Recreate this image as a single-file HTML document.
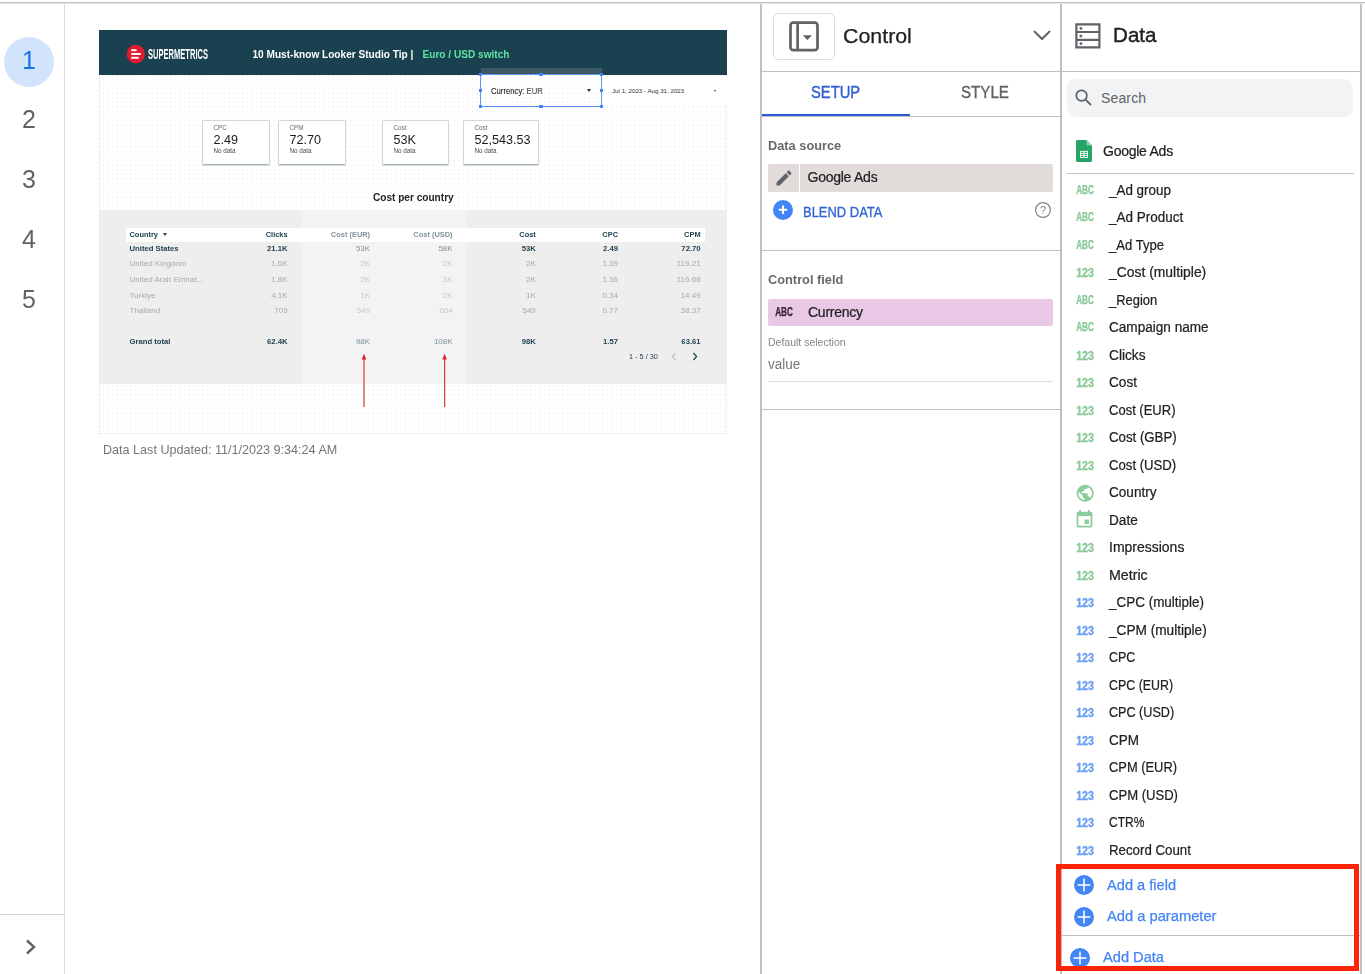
<!DOCTYPE html>
<html lang="en">
<head>
<meta charset="utf-8">
<title>Looker Studio – Control / Data</title>
<style>
html,body{margin:0;padding:0;}
body{width:1365px;height:974px;position:relative;overflow:hidden;background:#fff;
  font-family:"Liberation Sans",sans-serif;color:#202124;}
.abs{position:absolute;}
.t{position:absolute;white-space:nowrap;line-height:1;transform-origin:0 50%;}
.ln{position:absolute;background:#bdc1c6;}
/* left nav */
.pg{position:absolute;left:0;width:58px;text-align:center;font-size:25px;line-height:1;color:#5f6368;}
/* canvas */
#cv{position:absolute;left:99px;top:30px;width:628px;height:403.5px;
  background-color:#fff;
  background-image:radial-gradient(circle,#e0e2e3 0.4px,transparent 0.8px);
  background-size:4.5px 4.5px;background-position:-2.25px -2px;}
.lato{font-family:"Liberation Sans",sans-serif;}
.card{position:absolute;top:89.6px;height:45.6px;background:#fff;border:1px solid #ccd8db;border-bottom-color:#a3b3b9;border-radius:2px;box-sizing:border-box;box-shadow:0 1px 1px rgba(60,80,90,0.22);}
.card .l{position:absolute;left:10.5px;top:4.2px;font-size:6.3px;line-height:1;color:#6a6a6a;white-space:nowrap;}
.card .v{position:absolute;left:10.5px;top:13.2px;font-size:12.6px;line-height:1;color:#1b1b1b;white-space:nowrap;}
.card .n{position:absolute;left:10.5px;top:27.7px;font-size:6.3px;line-height:1;color:#4a4a4a;white-space:nowrap;}
.row{position:absolute;left:0;width:629px;height:10px;font-size:8px;line-height:10px;color:#1f4250;}
.row.b{font-size:7.7px;}
.row.h{font-size:7.45px;}
.row span{position:absolute;top:0;white-space:nowrap;}
.row .c0{left:30.5px;}
.row .c1{right:440.4px;}
.row .c2{right:357.9px;}
.row .c3{right:275.4px;}
.row .c4{right:192.2px;}
.row .c5{right:110px;}
.row .c6{right:27.4px;}
.b{font-weight:bold;}
.fd{color:#a0acb1;}
.fd2{color:#c2cacd;}
.md{color:#7d939b;}
/* panels */
.fi{position:absolute;left:1076px;width:19px;height:11px;}
.fn{position:absolute;left:1109px;font-size:14px;line-height:16px;white-space:nowrap;color:#202124;transform-origin:0 50%;-webkit-text-stroke:0.22px #202124;}
</style>
</head>
<body>
<div id="wrap" style="position:absolute;left:0;top:0;width:1365px;height:974px;overflow:hidden;opacity:0.999">

<!-- top border -->
<div class="ln" style="left:0;top:2px;width:1365px;height:2px;background:linear-gradient(#bcc0c7 0,#bcc0c7 50%,#e2e4e8 50%,#e2e4e8 100%)"></div>

<!-- LEFT NAV -->
<div class="ln" style="left:64px;top:4px;width:1px;height:970px;background:#d8dadd"></div>
<div class="abs" style="left:4px;top:37px;width:50px;height:50px;border-radius:50%;background:#d2e3fc"></div>
<div class="pg" style="top:48px;color:#1a73e8">1</div>
<div class="pg" style="top:107px">2</div>
<div class="pg" style="top:167px">3</div>
<div class="pg" style="top:227px">4</div>
<div class="pg" style="top:287px">5</div>
<div class="ln" style="left:0;top:914px;width:64px;height:1px;background:#d4d6da"></div>
<svg class="abs" style="left:20px;top:934px" width="20" height="26" viewBox="0 0 20 26"><path d="M7 6.5 L14 13 L7 19.5" fill="none" stroke="#5f6368" stroke-width="2.4"/></svg>

<!-- CANVAS -->
<div id="cv" class="lato">
  <div class="abs" style="left:0;top:44px;width:628px;height:359.5px;box-sizing:border-box;border:1px dotted #dddfdf;border-top:none"></div>
  <div class="abs" style="left:0;top:0;width:628px;height:44.5px;background:#19414f"></div>
  <!-- logo -->
  <svg class="abs" style="left:27px;top:14px" width="20" height="20" viewBox="0 0 20 20">
    <circle cx="9.8" cy="10" r="9.2" fill="#e01b2f"/>
    <rect x="5.2" y="5.2" width="5.4" height="2" fill="#fff"/>
    <rect x="5.2" y="9" width="9.6" height="2" fill="#fff"/>
    <rect x="5.2" y="12.8" width="7.4" height="2" fill="#fff"/>
  </svg>
  <svg class="abs" style="left:48px;top:16px" width="64" height="16" viewBox="0 0 64 16">
    <text x="1" y="13.2" font-family="Liberation Sans, sans-serif" font-weight="bold" font-size="14.2" fill="#fff" textLength="60" lengthAdjust="spacingAndGlyphs">SUPERMETRICS</text>
  </svg>
  <div class="t b" style="left:153.5px;top:19.8px;font-size:10.1px;color:#fff">10 Must-know Looker Studio Tip |</div>
  <div class="t b" style="left:323.5px;top:19.8px;font-size:10.1px;color:#5fe3a1">Euro / USD switch</div>

  <!-- selected control -->
  <div class="abs" style="left:381.5px;top:38px;width:121px;height:6.5px;background:#3b5964"></div>
  <div class="abs" style="left:381px;top:44px;width:122px;height:33px;border:1px solid #5e97f6;box-sizing:border-box"></div>
  <div class="t" style="left:392.3px;top:56.9px;font-size:8.3px;color:#222;transform:scaleX(0.93);-webkit-text-stroke:0.12px #333">Currency<span style="color:#555">: EUR</span></div>
  <div class="abs" style="left:487.5px;top:59px;width:0;height:0;border-left:2.4px solid transparent;border-right:2.4px solid transparent;border-top:3px solid #333"></div>
  <!-- handles -->
  <div class="abs" style="left:379.9px;top:42.9px;width:3.2px;height:3.2px;background:#4285f4"></div>
  <div class="abs" style="left:440.4px;top:42.9px;width:3.2px;height:3.2px;background:#4285f4"></div>
  <div class="abs" style="left:500.9px;top:42.9px;width:3.2px;height:3.2px;background:#4285f4"></div>
  <div class="abs" style="left:379.9px;top:58.9px;width:3.2px;height:3.2px;background:#4285f4"></div>
  <div class="abs" style="left:500.9px;top:58.9px;width:3.2px;height:3.2px;background:#4285f4"></div>
  <div class="abs" style="left:379.9px;top:74.9px;width:3.2px;height:3.2px;background:#4285f4"></div>
  <div class="abs" style="left:440.4px;top:74.9px;width:3.2px;height:3.2px;background:#4285f4"></div>
  <div class="abs" style="left:500.9px;top:74.9px;width:3.2px;height:3.2px;background:#4285f4"></div>
  <!-- date range -->
  <div class="abs" style="left:504px;top:47px;width:124px;height:28px;background:#fff"></div>
  <div class="t" style="left:513px;top:57.5px;font-size:6.2px;color:#333">Jul 1, 2023 - Aug 31, 2023</div>
  <div class="abs" style="left:614.5px;top:60px;width:0;height:0;border-left:1.8px solid transparent;border-right:1.8px solid transparent;border-top:2.4px solid #333"></div>

  <!-- KPI cards -->
  <div class="card" style="left:103px;width:68px"><div class="l">CPC</div><div class="v">2.49</div><div class="n">No data</div></div>
  <div class="card" style="left:179px;width:68px"><div class="l">CPM</div><div class="v">72.70</div><div class="n">No data</div></div>
  <div class="card" style="left:283px;width:67px"><div class="l">Cost</div><div class="v">53K</div><div class="n">No data</div></div>
  <div class="card" style="left:364px;width:76px"><div class="l">Cost</div><div class="v">52,543.53</div><div class="n">No data</div></div>

  <div class="t b" style="left:273.5px;top:161.8px;font-size:11.4px;color:#222;transform:scaleX(0.885)">Cost per country</div>

  <!-- table -->
  <div class="abs" style="left:0;top:180px;width:628px;height:174px;background:#eeeeee"></div>
  <div class="abs" style="left:202px;top:180px;width:165.5px;height:174px;background:#f3f3f3"></div>
  <div class="abs" style="left:27px;top:197.5px;width:579px;height:14px;background:#fff"></div>
  <div class="abs" style="left:202px;top:197.5px;width:165.5px;height:14px;background:rgba(255,255,255,0.6)"></div>

  <div class="row b h" style="top:199.9px"><span class="c0">Country <i style="display:inline-block;width:0;height:0;border-left:2.1px solid transparent;border-right:2.1px solid transparent;border-top:3px solid #1f4250;vertical-align:0.5px;margin-left:2.5px"></i></span><span class="c1">Clicks</span><span class="c2 md">Cost (EUR)</span><span class="c3 md">Cost (USD)</span><span class="c4">Cost</span><span class="c5">CPC</span><span class="c6">CPM</span></div>
  <div class="row b" style="top:213.9px"><span class="c0">United States</span><span class="c1">21.1K</span><span class="c2 md" style="font-weight:normal;font-size:8px">53K</span><span class="c3 md" style="font-weight:normal;font-size:8px">58K</span><span class="c4">53K</span><span class="c5">2.49</span><span class="c6">72.70</span></div>
  <div class="row fd" style="top:228.9px"><span class="c0">United Kingdom</span><span class="c1">1.6K</span><span class="c2 fd2">2K</span><span class="c3 fd2">2K</span><span class="c4">2K</span><span class="c5">1.39</span><span class="c6">119.21</span></div>
  <div class="row fd" style="top:244.9px"><span class="c0">United Arab Emirat...</span><span class="c1">1.8K</span><span class="c2 fd2">2K</span><span class="c3 fd2">3K</span><span class="c4">2K</span><span class="c5">1.36</span><span class="c6">116.68</span></div>
  <div class="row fd" style="top:260.9px"><span class="c0">Turkiye</span><span class="c1">4.1K</span><span class="c2 fd2">1K</span><span class="c3 fd2">2K</span><span class="c4">1K</span><span class="c5">0.34</span><span class="c6">14.49</span></div>
  <div class="row fd" style="top:275.9px"><span class="c0">Thailand</span><span class="c1">709</span><span class="c2 fd2">549</span><span class="c3 fd2">604</span><span class="c4">549</span><span class="c5">0.77</span><span class="c6">38.37</span></div>
  <div class="row b" style="top:306.9px"><span class="c0">Grand total</span><span class="c1">62.4K</span><span class="c2 md" style="font-weight:normal;font-size:8px">98K</span><span class="c3 md" style="font-weight:normal;font-size:8px">108K</span><span class="c4">98K</span><span class="c5">1.57</span><span class="c6">63.61</span></div>

  <div class="t" style="left:530px;top:322.5px;font-size:7.3px;color:#1f4250">1 - 5 / 30</div>
  <svg class="abs" style="left:568px;top:320px" width="36" height="13" viewBox="0 0 36 13">
    <path d="M8.6 3 L5.4 6.5 L8.6 10" fill="none" stroke="#b0b8bb" stroke-width="1.1"/>
    <path d="M26.4 3 L29.6 6.5 L26.4 10" fill="none" stroke="#1f4250" stroke-width="1.2"/>
  </svg>
  <!-- red arrows -->
  <svg class="abs" style="left:260px;top:322px" width="92" height="56" viewBox="0 0 92 56">
    <path d="M5 55 V6" stroke="#dc3a44" stroke-width="1.250" fill="none"/>
    <path d="M5 1.700 L7.300 7.600 H2.700 Z" fill="#d6222e"/>
    <path d="M85.600 55 V6" stroke="#dc3a44" stroke-width="1.250" fill="none"/>
    <path d="M85.600 1.700 L87.900 7.600 H83.300 Z" fill="#d6222e"/>
  </svg>
</div>
<div class="t" style="left:103px;top:443.5px;font-size:12.6px;color:#72777b">Data Last Updated: 11/1/2023 9:34:24 AM</div>

<!-- CONTROL PANEL -->
<div class="ln" style="left:760px;top:4px;width:2px;height:970px"></div>
<div class="abs" style="left:773px;top:13px;width:62px;height:47px;box-sizing:border-box;border:1px solid #dadce0;border-radius:5px;background:#fff"></div>
<svg class="abs" style="left:788px;top:20px" width="32" height="33" viewBox="0 0 32 33">
  <rect x="2.500" y="2.600" width="27" height="27.600" rx="2.800" fill="none" stroke="#5f6368" stroke-width="2.700"/>
  <path d="M9.600 2.600 V30.200" stroke="#5f6368" stroke-width="2.700"/>
  <path d="M14.800 15.300 H24 L19.400 20 Z" fill="#5f6368"/>
</svg>
<div class="t" style="left:842.5px;top:26.5px;font-size:19.8px;color:#202124;transform:scaleX(1.08);-webkit-text-stroke:0.25px #202124">Control</div>
<svg class="abs" style="left:1030px;top:26px" width="24" height="20" viewBox="0 0 24 20"><path d="M4.600 5.600 L12 13 L19.400 5.600" fill="none" stroke="#5a5e63" stroke-width="2" stroke-linecap="round" stroke-linejoin="round"/></svg>
<div class="ln" style="left:762px;top:71px;width:298px;height:1px"></div>
<div class="t" style="left:810.5px;top:84.5px;font-size:16px;color:#2d5fd0;transform:scaleX(0.922);-webkit-text-stroke:0.35px #2d5fd0">SETUP</div>
<div class="t" style="left:961px;top:84.5px;font-size:16px;color:#5f6368;transform:scaleX(0.945);-webkit-text-stroke:0.35px #5f6368">STYLE</div>
<div class="ln" style="left:762px;top:116px;width:298px;height:1px"></div>
<div class="abs" style="left:762px;top:114px;width:148px;height:2px;background:#2a5bd7"></div>

<div class="t b" style="left:768px;top:138.5px;font-size:13px;color:#66696d;transform:scaleX(0.984)">Data source</div>
<div class="abs" style="left:768px;top:164px;width:285px;height:28px;border-radius:2px;background:#e1dbd9"></div>
<div class="abs" style="left:798.5px;top:164px;width:1px;height:28px;background:#fff"></div>
<svg class="abs" style="left:774px;top:168px" width="20" height="20" viewBox="0 0 24 24"><path fill="#5f6368" d="M3 17.25V21h3.75L17.81 9.94l-3.75-3.75L3 17.25zM20.71 7.04a1 1 0 0 0 0-1.41l-2.34-2.34a1 1 0 0 0-1.41 0l-1.83 1.83 3.75 3.75 1.83-1.83z"/></svg>
<div class="t" style="left:807.5px;top:170px;font-size:14px;letter-spacing:-0.25px;color:#202124;-webkit-text-stroke:0.22px #202124">Google Ads</div>
<div class="abs" style="left:773px;top:199.5px;width:20px;height:20px;border-radius:50%;background:#4285f4"></div>
<svg class="abs" style="left:773px;top:199.5px" width="20" height="20" viewBox="0 0 20 20"><path d="M10 5.600 V14 M5.800 9.800 H14.200" stroke="#fff" stroke-width="2" fill="none"/></svg>
<div class="t" style="left:803px;top:205px;font-size:14px;color:#2f62d4;transform:scaleX(0.925);-webkit-text-stroke:0.3px #2f62d4">BLEND DATA</div>
<svg class="abs" style="left:1034px;top:201px" width="18" height="18" viewBox="0 0 18 18"><circle cx="9" cy="9" r="7.4" fill="none" stroke="#80868b" stroke-width="1.2"/><text x="9" y="13" text-anchor="middle" font-family="Liberation Sans, sans-serif" font-size="11" fill="#80868b">?</text></svg>
<div class="ln" style="left:762px;top:250px;width:298px;height:1px"></div>

<div class="t b" style="left:768px;top:272.5px;font-size:13px;color:#66696d;transform:scaleX(0.984)">Control field</div>
<div class="abs" style="left:768px;top:299px;width:285px;height:27px;border-radius:2px;background:#e8c8e4"></div>
<svg class="abs" style="left:775px;top:307px" width="19" height="11" viewBox="0 0 19 11"><text x="0.2" y="9.1" font-family="Liberation Sans, sans-serif" font-weight="bold" font-size="12" fill="#3c2a3a" stroke="#3c2a3a" stroke-width="0.35" textLength="17.8" lengthAdjust="spacingAndGlyphs">ABC</text></svg>
<div class="t" style="left:808px;top:305px;font-size:14px;letter-spacing:-0.25px;color:#202124;-webkit-text-stroke:0.22px #202124">Currency</div>
<div class="t" style="left:768px;top:337px;font-size:10.5px;color:#80868b">Default selection</div>
<div class="t" style="left:768px;top:357px;font-size:14px;color:#757575;transform:scaleX(0.96)">value</div>
<div class="ln" style="left:768px;top:381px;width:285px;height:1px;background:#dcdee1"></div>
<div class="ln" style="left:762px;top:409px;width:298px;height:1px"></div>

<!-- DATA PANEL -->
<div class="ln" style="left:1060px;top:4px;width:2px;height:970px"></div>
<div class="ln" style="left:1360px;top:4px;width:2px;height:970px"></div>
<svg class="abs" style="left:1075px;top:23px" width="26" height="26" viewBox="0 0 26 26">
  <path d="M1.4 1.4 H24.4 V24.4 H1.4 Z M1.4 9 H24.4 M1.4 16.8 H24.4" fill="none" stroke="#5f6368" stroke-width="2.2"/>
  <rect x="4.6" y="4.2" width="2.6" height="2.4" fill="#5f6368"/><rect x="4.6" y="11.8" width="2.6" height="2.4" fill="#5f6368"/><rect x="4.6" y="19.4" width="2.6" height="2.4" fill="#5f6368"/>
</svg>
<div class="t" style="left:1113px;top:25px;font-size:20px;color:#202124;-webkit-text-stroke:0.4px #202124;transform:scaleX(1.03)">Data</div>
<div class="ln" style="left:1062px;top:71px;width:298px;height:1px"></div>
<div class="abs" style="left:1067px;top:79px;width:286px;height:38px;border-radius:9px;background:#f1f3f4"></div>
<svg class="abs" style="left:1074px;top:88px" width="20" height="20" viewBox="0 0 20 20"><circle cx="7.6" cy="7.6" r="5.3" fill="none" stroke="#5f6368" stroke-width="1.7"/><path d="M11.6 11.6 L17 17" stroke="#5f6368" stroke-width="1.8"/></svg>
<div class="t" style="left:1101px;top:91px;font-size:14px;letter-spacing:0.15px;color:#5f6368">Search</div>

<svg class="abs" style="left:1076px;top:140px" width="16" height="22" viewBox="0 0 16 22">
  <path d="M1.5 0 H10.5 L16 5.5 V20.5 A1.5 1.5 0 0 1 14.5 22 H1.5 A1.5 1.5 0 0 1 0 20.500 V1.5 A1.5 1.5 0 0 1 1.5 0 Z" fill="#23a566"/>
  <path d="M10.500 0 L16 5.500 H11.500 A1 1 0 0 1 10.500 4.500 Z" fill="#8ed1b1"/>
  <rect x="4" y="10.900" width="8" height="7" fill="#fff"/><g fill="#23a566"><rect x="4.900" y="11.800" width="2.650" height="1.150"/><rect x="8.450" y="11.800" width="2.650" height="1.150"/><rect x="4.900" y="13.850" width="2.650" height="1.150"/><rect x="8.450" y="13.850" width="2.650" height="1.150"/><rect x="4.900" y="15.900" width="2.650" height="1.150"/><rect x="8.450" y="15.900" width="2.650" height="1.150"/></g>
</svg>
<div class="t" style="left:1103px;top:144px;font-size:14px;letter-spacing:-0.25px;color:#202124;-webkit-text-stroke:0.22px #202124">Google Ads</div>
<div class="ln" style="left:1067px;top:173px;width:287px;height:1px"></div>

<!--FIELDS-->
<svg class="fi" style="top:184.5px" width="19" height="11" viewBox="0 0 19 11"><text x="0.2" y="9.1" font-family="Liberation Sans, sans-serif" font-weight="bold" font-size="12" fill="#8ccb9a" stroke="#8ccb9a" stroke-width="0.35" textLength="17.8" lengthAdjust="spacingAndGlyphs">ABC</text></svg>
<div class="fn" style="top:182px;transform:scaleX(0.957)">_Ad group</div>
<svg class="fi" style="top:212px" width="19" height="11" viewBox="0 0 19 11"><text x="0.2" y="9.1" font-family="Liberation Sans, sans-serif" font-weight="bold" font-size="12" fill="#8ccb9a" stroke="#8ccb9a" stroke-width="0.35" textLength="17.8" lengthAdjust="spacingAndGlyphs">ABC</text></svg>
<div class="fn" style="top:209px;transform:scaleX(0.964)">_Ad Product</div>
<svg class="fi" style="top:239.5px" width="19" height="11" viewBox="0 0 19 11"><text x="0.2" y="9.1" font-family="Liberation Sans, sans-serif" font-weight="bold" font-size="12" fill="#8ccb9a" stroke="#8ccb9a" stroke-width="0.35" textLength="17.8" lengthAdjust="spacingAndGlyphs">ABC</text></svg>
<div class="fn" style="top:237px;transform:scaleX(0.934)">_Ad Type</div>
<svg class="fi" style="top:267px" width="19" height="11" viewBox="0 0 19 11"><text x="0.2" y="9.7" font-family="Liberation Sans, sans-serif" font-weight="bold" font-size="12" fill="#8ccb9a" stroke="#8ccb9a" stroke-width="0.35" textLength="17.8" lengthAdjust="spacingAndGlyphs">123</text></svg>
<div class="fn" style="top:264px;transform:scaleX(0.992)">_Cost (multiple)</div>
<svg class="fi" style="top:294.5px" width="19" height="11" viewBox="0 0 19 11"><text x="0.2" y="9.1" font-family="Liberation Sans, sans-serif" font-weight="bold" font-size="12" fill="#8ccb9a" stroke="#8ccb9a" stroke-width="0.35" textLength="17.8" lengthAdjust="spacingAndGlyphs">ABC</text></svg>
<div class="fn" style="top:292px;transform:scaleX(0.923)">_Region</div>
<svg class="fi" style="top:322px" width="19" height="11" viewBox="0 0 19 11"><text x="0.2" y="9.1" font-family="Liberation Sans, sans-serif" font-weight="bold" font-size="12" fill="#8ccb9a" stroke="#8ccb9a" stroke-width="0.35" textLength="17.8" lengthAdjust="spacingAndGlyphs">ABC</text></svg>
<div class="fn" style="top:319px;transform:scaleX(0.970)">Campaign name</div>
<svg class="fi" style="top:349.5px" width="19" height="11" viewBox="0 0 19 11"><text x="0.2" y="9.7" font-family="Liberation Sans, sans-serif" font-weight="bold" font-size="12" fill="#8ccb9a" stroke="#8ccb9a" stroke-width="0.35" textLength="17.8" lengthAdjust="spacingAndGlyphs">123</text></svg>
<div class="fn" style="top:347px;transform:scaleX(0.978)">Clicks</div>
<svg class="fi" style="top:377px" width="19" height="11" viewBox="0 0 19 11"><text x="0.2" y="9.7" font-family="Liberation Sans, sans-serif" font-weight="bold" font-size="12" fill="#8ccb9a" stroke="#8ccb9a" stroke-width="0.35" textLength="17.8" lengthAdjust="spacingAndGlyphs">123</text></svg>
<div class="fn" style="top:374px;transform:scaleX(0.971)">Cost</div>
<svg class="fi" style="top:404.5px" width="19" height="11" viewBox="0 0 19 11"><text x="0.2" y="9.7" font-family="Liberation Sans, sans-serif" font-weight="bold" font-size="12" fill="#8ccb9a" stroke="#8ccb9a" stroke-width="0.35" textLength="17.8" lengthAdjust="spacingAndGlyphs">123</text></svg>
<div class="fn" style="top:402px;transform:scaleX(0.929)">Cost (EUR)</div>
<svg class="fi" style="top:432px" width="19" height="11" viewBox="0 0 19 11"><text x="0.2" y="9.7" font-family="Liberation Sans, sans-serif" font-weight="bold" font-size="12" fill="#8ccb9a" stroke="#8ccb9a" stroke-width="0.35" textLength="17.8" lengthAdjust="spacingAndGlyphs">123</text></svg>
<div class="fn" style="top:429px;transform:scaleX(0.946)">Cost (GBP)</div>
<svg class="fi" style="top:459.5px" width="19" height="11" viewBox="0 0 19 11"><text x="0.2" y="9.7" font-family="Liberation Sans, sans-serif" font-weight="bold" font-size="12" fill="#8ccb9a" stroke="#8ccb9a" stroke-width="0.35" textLength="17.8" lengthAdjust="spacingAndGlyphs">123</text></svg>
<div class="fn" style="top:457px;transform:scaleX(0.939)">Cost (USD)</div>
<svg class="abs" style="left:1074.5px;top:482.8px" width="20.4" height="20.4" viewBox="0 0 24 24"><path fill="#8ccb9a" d="M12 2C6.48 2 2 6.48 2 12s4.480 10 10 10 10-4.480 10-10S17.520 2 12 2zm-1 17.930c-3.950-.490-7-3.850-7-7.930 0-.620.080-1.210.210-1.790L9 15v1c0 1.100.900 2 2 2v1.930zm6.900-2.540c-.260-.810-1-1.390-1.900-1.390h-1v-3c0-.550-.450-1-1-1H8v-2h2c.550 0 1-.450 1-1V7h2c1.100 0 2-.900 2-2v-.410c2.930 1.190 5 4.060 5 7.410 0 2.080-.800 3.970-2.100 5.390z"/></svg>
<div class="fn" style="top:484px;transform:scaleX(0.970)">Country</div>
<svg class="abs" style="left:1074.3px;top:509.3px" width="21" height="21" viewBox="0 0 24 24"><path fill="#8ccb9a" d="M17 12h-5v5h5v-5zM16 1v2H8V1H6v2H5c-1.110 0-1.990.900-1.990 2L3 19c0 1.100.890 2 2 2h14c1.100 0 2-.900 2-2V5c0-1.100-.900-2-2-2h-1V1h-2zm3 18H5V8h14v11z"/></svg>
<div class="fn" style="top:512px;transform:scaleX(0.971)">Date</div>
<svg class="fi" style="top:542px" width="19" height="11" viewBox="0 0 19 11"><text x="0.2" y="9.7" font-family="Liberation Sans, sans-serif" font-weight="bold" font-size="12" fill="#8ccb9a" stroke="#8ccb9a" stroke-width="0.35" textLength="17.8" lengthAdjust="spacingAndGlyphs">123</text></svg>
<div class="fn" style="top:539px;transform:scaleX(0.999)">Impressions</div>
<svg class="fi" style="top:569.5px" width="19" height="11" viewBox="0 0 19 11"><text x="0.2" y="9.7" font-family="Liberation Sans, sans-serif" font-weight="bold" font-size="12" fill="#8ccb9a" stroke="#8ccb9a" stroke-width="0.35" textLength="17.8" lengthAdjust="spacingAndGlyphs">123</text></svg>
<div class="fn" style="top:567px;transform:scaleX(1.015)">Metric</div>
<svg class="fi" style="top:597px" width="19" height="11" viewBox="0 0 19 11"><text x="0.2" y="9.7" font-family="Liberation Sans, sans-serif" font-weight="bold" font-size="12" fill="#6a9ff5" stroke="#6a9ff5" stroke-width="0.35" textLength="17.8" lengthAdjust="spacingAndGlyphs">123</text></svg>
<div class="fn" style="top:594px;transform:scaleX(0.962)">_CPC (multiple)</div>
<svg class="fi" style="top:624.5px" width="19" height="11" viewBox="0 0 19 11"><text x="0.2" y="9.7" font-family="Liberation Sans, sans-serif" font-weight="bold" font-size="12" fill="#6a9ff5" stroke="#6a9ff5" stroke-width="0.35" textLength="17.8" lengthAdjust="spacingAndGlyphs">123</text></svg>
<div class="fn" style="top:622px;transform:scaleX(0.974)">_CPM (multiple)</div>
<svg class="fi" style="top:652px" width="19" height="11" viewBox="0 0 19 11"><text x="0.2" y="9.7" font-family="Liberation Sans, sans-serif" font-weight="bold" font-size="12" fill="#6a9ff5" stroke="#6a9ff5" stroke-width="0.35" textLength="17.8" lengthAdjust="spacingAndGlyphs">123</text></svg>
<div class="fn" style="top:649px;transform:scaleX(0.890)">CPC</div>
<svg class="fi" style="top:679.5px" width="19" height="11" viewBox="0 0 19 11"><text x="0.2" y="9.7" font-family="Liberation Sans, sans-serif" font-weight="bold" font-size="12" fill="#6a9ff5" stroke="#6a9ff5" stroke-width="0.35" textLength="17.8" lengthAdjust="spacingAndGlyphs">123</text></svg>
<div class="fn" style="top:677px;transform:scaleX(0.886)">CPC (EUR)</div>
<svg class="fi" style="top:707px" width="19" height="11" viewBox="0 0 19 11"><text x="0.2" y="9.7" font-family="Liberation Sans, sans-serif" font-weight="bold" font-size="12" fill="#6a9ff5" stroke="#6a9ff5" stroke-width="0.35" textLength="17.8" lengthAdjust="spacingAndGlyphs">123</text></svg>
<div class="fn" style="top:704px;transform:scaleX(0.900)">CPC (USD)</div>
<svg class="fi" style="top:734.5px" width="19" height="11" viewBox="0 0 19 11"><text x="0.2" y="9.7" font-family="Liberation Sans, sans-serif" font-weight="bold" font-size="12" fill="#6a9ff5" stroke="#6a9ff5" stroke-width="0.35" textLength="17.8" lengthAdjust="spacingAndGlyphs">123</text></svg>
<div class="fn" style="top:732px;transform:scaleX(0.963)">CPM</div>
<svg class="fi" style="top:762px" width="19" height="11" viewBox="0 0 19 11"><text x="0.2" y="9.7" font-family="Liberation Sans, sans-serif" font-weight="bold" font-size="12" fill="#6a9ff5" stroke="#6a9ff5" stroke-width="0.35" textLength="17.8" lengthAdjust="spacingAndGlyphs">123</text></svg>
<div class="fn" style="top:759px;transform:scaleX(0.920)">CPM (EUR)</div>
<svg class="fi" style="top:789.5px" width="19" height="11" viewBox="0 0 19 11"><text x="0.2" y="9.7" font-family="Liberation Sans, sans-serif" font-weight="bold" font-size="12" fill="#6a9ff5" stroke="#6a9ff5" stroke-width="0.35" textLength="17.8" lengthAdjust="spacingAndGlyphs">123</text></svg>
<div class="fn" style="top:787px;transform:scaleX(0.933)">CPM (USD)</div>
<svg class="fi" style="top:817px" width="19" height="11" viewBox="0 0 19 11"><text x="0.2" y="9.7" font-family="Liberation Sans, sans-serif" font-weight="bold" font-size="12" fill="#6a9ff5" stroke="#6a9ff5" stroke-width="0.35" textLength="17.8" lengthAdjust="spacingAndGlyphs">123</text></svg>
<div class="fn" style="top:814px;transform:scaleX(0.860)">CTR%</div>
<svg class="fi" style="top:844.5px" width="19" height="11" viewBox="0 0 19 11"><text x="0.2" y="9.7" font-family="Liberation Sans, sans-serif" font-weight="bold" font-size="12" fill="#6a9ff5" stroke="#6a9ff5" stroke-width="0.35" textLength="17.8" lengthAdjust="spacingAndGlyphs">123</text></svg>
<div class="fn" style="top:842px;transform:scaleX(0.948)">Record Count</div>
<!--/FIELDS-->

<!-- add rows -->
<div class="t" style="left:1106.500px;top:878px;font-size:14px;color:#4285f4;transform:scaleX(1.045);-webkit-text-stroke:0.25px #4285f4">Add a field</div>
<div class="t" style="left:1106.500px;top:909px;font-size:14px;color:#4285f4;transform:scaleX(1.05);-webkit-text-stroke:0.25px #4285f4">Add a parameter</div>
<div class="ln" style="left:1062px;top:935px;width:298px;height:1px"></div>
<div class="t" style="left:1102.500px;top:950px;font-size:14px;color:#4285f4;transform:scaleX(1.045);-webkit-text-stroke:0.25px #4285f4">Add Data</div>
<svg class="abs" style="left:1068px;top:873px" width="30" height="100" viewBox="0 0 30 100">
  <g fill="#4285f4"><circle cx="16" cy="12" r="10"/><circle cx="16" cy="44" r="10"/><circle cx="12" cy="85" r="10"/></g>
  <g stroke="#fff" stroke-width="1.5" fill="none"><path d="M16 5.500 V18.500 M9.500 12 H22.500"/><path d="M16 37.500 V50.500 M9.500 44 H22.500"/><path d="M12 78.500 V91.500 M5.500 85 H18.500"/></g>
</svg>
<!-- red highlight -->
<div class="abs" style="left:1056px;top:864px;width:303px;height:107px;box-sizing:border-box;border:5px solid #fb2407"></div>

</div>
</body>
</html>
